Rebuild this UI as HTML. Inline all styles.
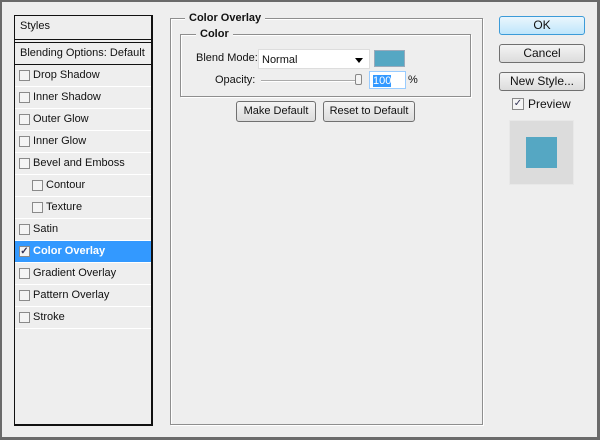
<!DOCTYPE html>
<html><head><style>
*{box-sizing:border-box;margin:0;padding:0}
body{width:600px;height:440px;background:#eeeeee;border:2px solid #6a6a6a;border-right-width:3px;border-bottom-width:3px;position:relative;font-family:"Liberation Sans",sans-serif;font-size:11px;color:#111;overflow:hidden}
.a{position:absolute}
.lp{left:12px;top:13px;width:139px;height:411px;border:2px solid #111;border-width:1px 2px 2px 1px;border-color:#111}
.row{position:absolute;left:0;width:136px;height:22px;border-bottom:1px solid #fff;line-height:21px;padding-left:18px}
.cb{position:absolute;width:11px;height:11px;border:1px solid #8a8a8a;background:#f4f4f4;top:5px;left:4px}
.btn{position:absolute;border:1px solid #707070;border-radius:3px;background:linear-gradient(#f4f4f4,#dcdcdc);text-align:center;font-size:12px;line-height:17px}
.fs{position:absolute;border:1px solid #8e8e8e;box-shadow:1px 1px 0 #fff, inset 1px 1px 0 #fff}
.lg{position:absolute;background:#eee;font-weight:bold;padding:0 4px;font-size:11px}
</style></head><body>
<div class="a lp">
 <div class="row" style="top:0;height:23px;padding-left:5px;border-bottom:none">Styles</div>
 <div class="a" style="left:0;top:23px;width:136px;height:4px;border-top:1px solid #111;border-bottom:1px solid #111"></div>
 <div class="row" style="top:27px;padding-left:5px;height:22px;border-bottom:1px solid #111">Blending Options: Default</div>
 <div class="row" style="top:49px"><span class="cb"></span>Drop Shadow</div>
 <div class="row" style="top:71px"><span class="cb"></span>Inner Shadow</div>
 <div class="row" style="top:93px"><span class="cb"></span>Outer Glow</div>
 <div class="row" style="top:115px"><span class="cb"></span>Inner Glow</div>
 <div class="row" style="top:137px"><span class="cb"></span>Bevel and Emboss</div>
 <div class="row" style="top:159px;padding-left:31px"><span class="cb" style="left:17px"></span>Contour</div>
 <div class="row" style="top:181px;padding-left:31px"><span class="cb" style="left:17px"></span>Texture</div>
 <div class="row" style="top:203px"><span class="cb"></span>Satin</div>
 <div class="row" style="top:225px;background:#3399ff;color:#fff;font-weight:bold"><span class="cb" style="color:#335;font-size:10px;line-height:9px;text-align:center">✓</span>Color Overlay</div>
 <div class="row" style="top:247px"><span class="cb"></span>Gradient Overlay</div>
 <div class="row" style="top:269px"><span class="cb"></span>Pattern Overlay</div>
 <div class="row" style="top:291px"><span class="cb"></span>Stroke</div>
</div>

<div class="fs" style="left:168px;top:16px;width:313px;height:407px"></div>
<div class="lg" style="left:183px;top:10px">Color Overlay</div>
<div class="fs" style="left:178px;top:32px;width:291px;height:63px"></div>
<div class="lg" style="left:194px;top:26px">Color</div>
<div class="a" style="left:194px;top:50px">Blend Mode:</div>
<div class="a" style="left:256px;top:47px;width:112px;height:20px;background:#fff;border:1px solid #ddd;padding:4px 3px">Normal<span class="a" style="right:6px;top:8px;border:4px solid transparent;border-top:5px solid #000;border-bottom:0"></span></div>
<div class="a" style="left:372px;top:48px;width:31px;height:17px;background:#55a7c3;border:1px solid #9ab"></div>
<div class="a" style="left:213px;top:72px">Opacity:</div>
<div class="a" style="left:259px;top:78px;width:100px;height:2px;border-top:1px solid #aaa;border-bottom:1px solid #fff"></div>
<div class="a" style="left:353px;top:72px;width:7px;height:11px;border:1px solid #888;border-radius:2px;background:#f4f4f4"></div>
<div class="a" style="left:367px;top:69px;width:37px;height:18px;background:#fff;border:1px solid #9cf;padding:3px 3px"><span style="background:#39f;color:#fff">100</span></div>
<div class="a" style="left:406px;top:72px">%</div>
<div class="btn" style="left:234px;top:99px;width:80px;height:21px;line-height:19px;font-size:11px">Make Default</div>
<div class="btn" style="left:321px;top:99px;width:92px;height:21px;line-height:19px;font-size:11px">Reset to Default</div>

<div class="btn" style="left:497px;top:14px;width:86px;height:19px;border-color:#3c9bd8;background:linear-gradient(#eaf6fd,#bfe6fb)">OK</div>
<div class="btn" style="left:497px;top:42px;width:86px;height:19px">Cancel</div>
<div class="btn" style="left:497px;top:70px;width:86px;height:19px">New Style...</div>
<div class="a" style="left:510px;top:96px;width:12px;height:12px;border:1px solid #888;background:#f4f4f4;color:#335;font-size:10px;line-height:10px;text-align:center">✓</div>
<div class="a" style="left:526px;top:95px;font-size:12px">Preview</div>
<div class="a" style="left:507px;top:118px;width:65px;height:65px;background:#dcdcdc;border:1px solid #e8e8e8"></div>
<div class="a" style="left:524px;top:135px;width:31px;height:31px;background:#55a7c3"></div>
</body></html>
